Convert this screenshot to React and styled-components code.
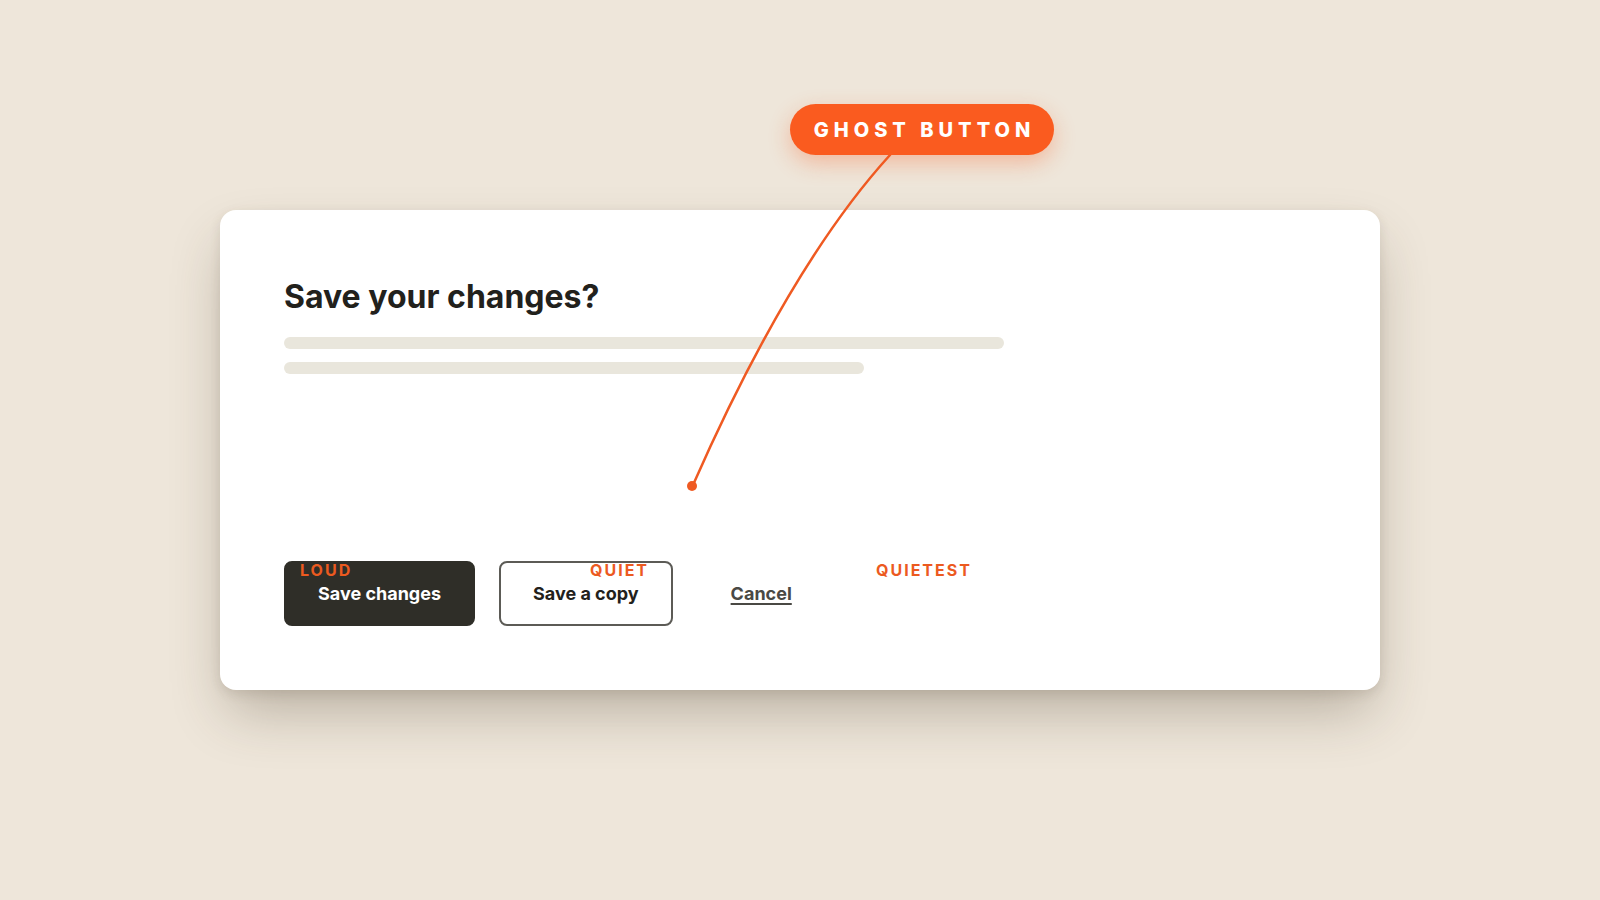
import React from "react";
import styled, { createGlobalStyle } from "styled-components";

const GlobalStyle = createGlobalStyle`
  html, body {
    margin: 0;
    padding: 0;
    background: #eee6da;
    font-family: Inter, "Noto Sans", "Liberation Sans", sans-serif;
  }
`;

const Page = styled.div`
  position: relative;
  width: 1600px;
  height: 900px;
  display: flex;
  align-items: center;
  justify-content: center;
  overflow: hidden;
`;

const Dialog = styled.div`
  box-sizing: border-box;
  width: 1160px;
  height: 480px;
  padding: 64px;
  background: #ffffff;
  border-radius: 16px;
  display: flex;
  flex-direction: column;
  box-shadow: 0 28px 56px -8px rgba(70, 60, 40, 0.32),
    0 4px 12px rgba(70, 60, 40, 0.12);
`;

const Title = styled.h2`
  margin: 4px 0 21px;
  font-size: 32px;
  line-height: 38px;
  font-weight: 700;
  letter-spacing: 0;
  color: #22211c;
`;

const TextLine = styled.div`
  width: ${(p) => p.$width}px;
  height: 12px;
  border-radius: 6px;
  background: #e9e6dc;
  margin-bottom: 13px;
`;

const Actions = styled.div`
  margin-top: auto;
  display: flex;
  align-items: center;
  gap: 24px;
`;

const Button = styled.button`
  box-sizing: border-box;
  height: 65px;
  padding: 0 32px;
  border-radius: 8px;
  font-family: inherit;
  font-size: 18px;
  font-weight: 700;
  cursor: pointer;
  ${(p) =>
    p.$variant === "loud" &&
    `
    background: #2f2e28;
    color: #ffffff;
    border: 2px solid #2f2e28;
  `}
  ${(p) =>
    p.$variant === "quiet" &&
    `
    background: #ffffff;
    color: #22211c;
    border: 2px solid #5c5b56;
  `}
  ${(p) =>
    p.$variant === "ghost" &&
    `
    background: transparent;
    color: #4a4944;
    border: 2px solid transparent;
    text-decoration: underline;
    text-underline-offset: 3px;
    text-decoration-thickness: 2px;
  `}
`;

/* annotation layer drawn on top of the dialog */
const Overlay = styled.div`
  position: absolute;
  inset: 0;
  pointer-events: none;
`;

const Leader = styled.svg`
  position: absolute;
  inset: 0;
`;

const Callout = styled.div`
  position: absolute;
  left: 790px;
  top: 104px;
  box-sizing: border-box;
  width: 264px;
  height: 51px;
  padding-left: 5px;
  display: flex;
  align-items: center;
  justify-content: center;
  border-radius: 26px;
  background: #fa5b1f;
  color: #ffffff;
  font-size: 20px;
  font-weight: 800;
  letter-spacing: 5px;
  box-shadow: 0 8px 22px rgba(250, 91, 31, 0.32);
`;

const Tag = styled.span`
  position: absolute;
  left: ${(p) => p.$x}px;
  top: ${(p) => p.$y}px;
  font-size: 16px;
  line-height: 16px;
  font-weight: 700;
  letter-spacing: 2px;
  color: #ec5a1f;
`;

const App = () => {
  return (
    <>
      <GlobalStyle />
      <Page>
        <Dialog>
          <Title>Save your changes?</Title>
          <TextLine $width={720} />
          <TextLine $width={580} />
          <Actions>
            <Button $variant="loud">Save changes</Button>
            <Button $variant="quiet">Save a copy</Button>
            <Button $variant="ghost">Cancel</Button>
          </Actions>
        </Dialog>

        <Overlay>
          <Leader width="1600" height="900" viewBox="0 0 1600 900">
            <path
              d="M890 155 Q790 265 693 485"
              fill="none"
              stroke="#ef5a22"
              strokeWidth="2.5"
              strokeLinecap="round"
            />
            <circle cx="692" cy="486" r="5" fill="#ef5a22" />
          </Leader>
          <Callout>GHOST BUTTON</Callout>
          <Tag $x={300} $y={562}>LOUD</Tag>
          <Tag $x={590} $y={562}>QUIET</Tag>
          <Tag $x={876} $y={562}>QUIETEST</Tag>
        </Overlay>
      </Page>
    </>
  );
};

export default App;
